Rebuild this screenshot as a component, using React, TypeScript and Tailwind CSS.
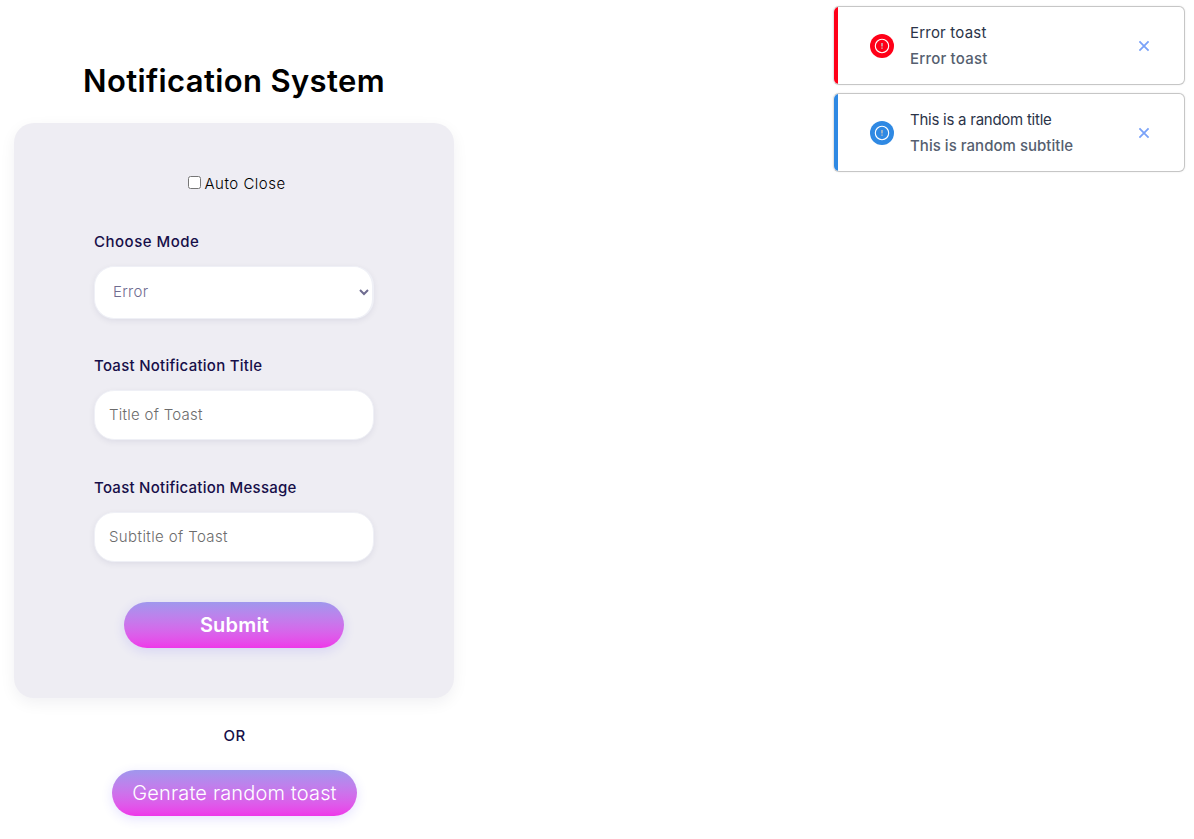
import { useState } from "react";

type Tone = "error" | "info";

const toasts: { id: number; tone: Tone; title: string; subtitle: string }[] = [
  { id: 1, tone: "error", title: "Error toast", subtitle: "Error toast" },
  { id: 2, tone: "info", title: "This is a random title", subtitle: "This is random subtitle" },
];

const spacing: Record<number, { title: string; subtitle: string }> = {
  1: { title: "tracking-[0.2px]", subtitle: "tracking-[0.2px]" },
  2: { title: "-tracking-[0.25px]", subtitle: "tracking-[0.03px]" },
};

function AlertIcon() {
  return (
    <svg width="16" height="16" viewBox="0 0 16 16" fill="none">
      <circle cx="8" cy="8" r="6.7" stroke="white" strokeWidth="1.1" />
      <path d="M8 5v3.6M8 9.6v1.2" stroke="#c0c0c0" strokeWidth="1.5" />
    </svg>
  );
}

function Toast({ id, tone, title, subtitle, onClose }: (typeof toasts)[number] & { onClose: () => void }) {
  const bar = tone === "error" ? "bg-[#ff0018]" : "bg-[#2f89e3]";
  return (
    <div className="flex h-[79px] w-[352px] items-center overflow-hidden rounded-[6px] border border-[#c6c6c6] border-l-[#e4e4e4] bg-white pr-[34px] shadow-[0_0_2px_rgba(0,0,0,0.1)]">
      <span className={`mr-8 w-1 shrink-0 self-stretch ${bar}`} />
      <span className={`flex size-6 shrink-0 items-center justify-center rounded-full ${bar}`}>
        <AlertIcon />
      </span>
      <div className="ml-4 flex-1 whitespace-nowrap text-[15px] leading-[26px]">
        <p className={`text-[#2b3448] ${spacing[id].title}`}>{title}</p>
        <p className={`font-medium text-[#565f70] ${spacing[id].subtitle}`}>{subtitle}</p>
      </div>
      <button type="button" aria-label="Close" onClick={onClose} className="flex size-3 items-center justify-center">
        <svg width="12" height="12" viewBox="0 0 12 12" stroke="#7aa2f8" strokeWidth="1.8" fill="none">
          <path d="M1.4 1.4l9.2 9.2M10.6 1.4l-9.2 9.2" />
        </svg>
      </button>
    </div>
  );
}

const labelClass = "flex h-6 items-center whitespace-nowrap text-[15px] font-medium text-[#170f49]";
const fieldClass =
  "w-[280px] rounded-[20px] border border-[#eff0f6] bg-white text-[15px] font-light outline-none shadow-[0_2px_6px_rgba(19,18,66,0.07)]";
const buttonClass =
  "h-[46px] rounded-full bg-linear-to-b from-[#9f97ed] to-[#ee36e9] text-[20px] leading-[46px] text-white whitespace-nowrap shadow-[0_3px_12px_rgba(74,58,255,0.14)]";

export default function App() {
  const [open, setOpen] = useState([1, 2]);
  return (
    <div className="flex h-[839px] justify-between overflow-hidden bg-white font-['Inter',sans-serif]">
      <main className="ml-[14px] flex w-[440px] flex-col items-center pt-[61px]">
        <h1 className="h-[62px] whitespace-nowrap text-[31px] leading-10 font-semibold tracking-[0.37px] text-black">
          Notification System
        </h1>
        <form
          onSubmit={(e) => e.preventDefault()}
          className="flex h-[575px] w-full shrink-0 flex-col items-center rounded-[20px] bg-[#eeedf3] px-[80px] pt-[49px] shadow-[0_5px_16px_rgba(8,15,52,0.06)]"
        >
          <label className="flex h-6 w-[93px] items-center gap-[4px] whitespace-nowrap text-[15px] font-light text-black">
            <input type="checkbox" className="mb-[3px] size-[13px] shrink-0" />
            <span className="tracking-[0.5px]">Auto Close</span>
          </label>
          <div className="mt-[34px] w-full">
            <label className={labelClass}>
              <span className="tracking-[0.5px]">Choose Mode</span>
            </label>
            <select className={`mt-3 h-[53px] border-r-2 pb-[2px] pl-[14px] tracking-[0.3px] text-[#6f6c90] ${fieldClass}`}>
              <option>Error</option>
              <option>Success</option>
              <option>Info</option>
            </select>
          </div>
          <div className="mt-[35px] w-full">
            <label className={labelClass}>
              <span className="tracking-[0.27px]">Toast Notification Title</span>
            </label>
            <input
              placeholder="Title of Toast"
              className={`mt-3 block h-[50px] px-[14px] pb-[2px] tracking-[0.27px] placeholder:text-[#6c6c6c] ${fieldClass}`}
            />
          </div>
          <div className="mt-[36px] w-full">
            <label className={labelClass}>
              <span className="tracking-[0.26px]">Toast Notification Message</span>
            </label>
            <input
              placeholder="Subtitle of Toast"
              className={`mt-3 block h-[50px] px-[14px] pb-[2px] tracking-[0.39px] placeholder:text-[#6c6c6c] ${fieldClass}`}
            />
          </div>
          <button
            type="submit"
            className={`mt-[40px] w-[220px] shrink-0 pl-px font-semibold tracking-[0.2px] ${buttonClass}`}
          >
            Submit
          </button>
        </form>
        <p className="mt-[26px] h-6 pl-px text-[15px] leading-6 font-medium tracking-[0.4px] text-[#170f49]">OR</p>
        <button
          type="button"
          className={`mt-[22px] ml-px w-[245px] shrink-0 font-light tracking-[0.15px] ${buttonClass}`}
        >
          Genrate random toast
        </button>
      </main>
      <aside className="mt-[6px] mr-[9px] flex flex-col gap-2">
        {toasts
          .filter((t) => open.includes(t.id))
          .map((t) => (
            <Toast key={t.id} {...t} onClose={() => setOpen(open.filter((id) => id !== t.id))} />
          ))}
      </aside>
    </div>
  );
}
